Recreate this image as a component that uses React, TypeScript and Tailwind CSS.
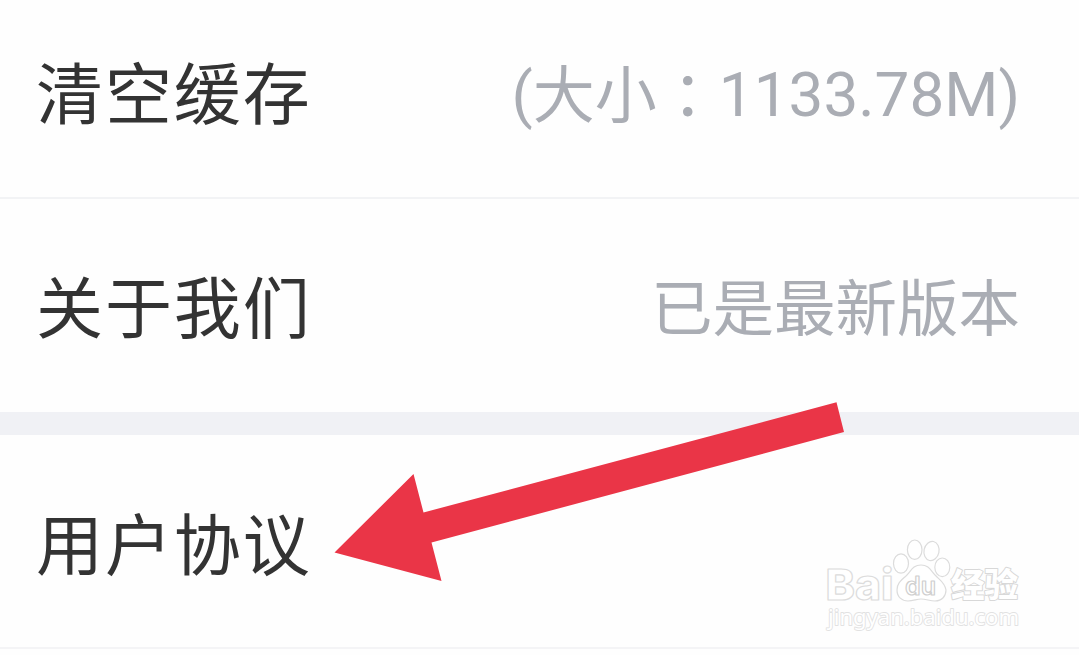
import type { ReactNode } from 'react';

type RowProps = { label: string; className: string; children?: ReactNode };

function Row({ label, className, children }: RowProps) {
  return (
    <div className={`flex justify-between pl-[36px] pr-[59px] ${className}`}>
      <span className="text-[67px] leading-none tracking-[1.9px] text-[#333333]">{label}</span>
      {children}
    </div>
  );
}

function Arrow() {
  return (
    <svg className="pointer-events-none absolute left-0 top-0" width="1079" height="655" viewBox="0 0 1079 655" aria-hidden="true">
      <polygon points="334.5,552.5 413.5,474 423.5,512.5 836.5,402.3 844,432 431.5,542.5 441.5,581" fill="#ea3547" />
    </svg>
  );
}

function Watermark() {
  return (
    <svg
      className="pointer-events-none absolute left-[810px] top-[530px]"
      width="230"
      height="110"
      viewBox="0 0 230 110"
      fill="#ffffff"
      stroke="#dcdcdc"
      strokeWidth="1.2"
      strokeLinejoin="round"
    >
      <text x="15.5" y="69.5" fontSize="43" fontFamily="Inter, sans-serif" fontWeight="800" textLength="68" lengthAdjust="spacingAndGlyphs">Bai</text>
      <ellipse cx="91" cy="33.5" rx="7.5" ry="9.7" />
      <ellipse cx="104.7" cy="19.7" rx="7.3" ry="9.7" />
      <ellipse cx="121.5" cy="21" rx="7.5" ry="9.7" transform="rotate(12 121.5 21)" />
      <ellipse cx="132.3" cy="37.3" rx="7.5" ry="9.3" />
      <path d="M111 35C103 35 101 41 96 46C90 51 87 54 87 60C87 67 92 71 98 71C103 71 107 69 111 69C116 69 120 71 125 71C132 71 136 66 136 60C135 53 130 50 126 46C121 41 119 35 111 35Z" />
      <text x="95" y="64.5" fontSize="25" fontFamily="Inter, sans-serif" fontWeight="600" textLength="31" lengthAdjust="spacingAndGlyphs" stroke="#cfcfcf">du</text>
      <text x="141" y="67" fontSize="33" fontFamily="'Noto Sans CJK SC', sans-serif" fontWeight="900" textLength="67" lengthAdjust="spacingAndGlyphs" paintOrder="stroke" stroke="#d8d8d8" strokeWidth="2">经验</text>
      <text x="18" y="95" fontSize="22" fontFamily="'Noto Sans', sans-serif" fontWeight="400" textLength="191" lengthAdjust="spacingAndGlyphs" paintOrder="stroke" stroke="#e2e2e2" strokeWidth="1.8">jingyan.baidu.com</text>
    </svg>
  );
}

export default function App() {
  return (
    <main className="relative h-[655px] w-[1079px] overflow-hidden bg-[#fefefe] font-['Noto_Sans_CJK_SC',sans-serif]">
      <Row label="清空缓存" className="h-[199px] border-b-2 border-[#f2f3f5] pt-[56px]">
        <span className="mt-[8px] whitespace-nowrap font-[Roboto,'Noto_Sans_CJK_TC',sans-serif] text-[62px] leading-none text-[#aaadb4]">
          (<span className="align-[-2px]">大小</span><span className="align-[-4px]">：</span>1133.78M)
        </span>
      </Row>
      <Row label="关于我们" className="h-[213px] pt-[71px]">
        <span className="mt-[4px] whitespace-nowrap text-[61.5px] leading-none text-[#aaadb4]">已是最新版本</span>
      </Row>
      <div className="h-[23px] bg-[#f0f1f5]" />
      <Row label="用户协议" className="h-[214px] border-b-2 border-[#f4f4f6] pt-[72px]" />
      <Arrow />
      <Watermark />
    </main>
  );
}
